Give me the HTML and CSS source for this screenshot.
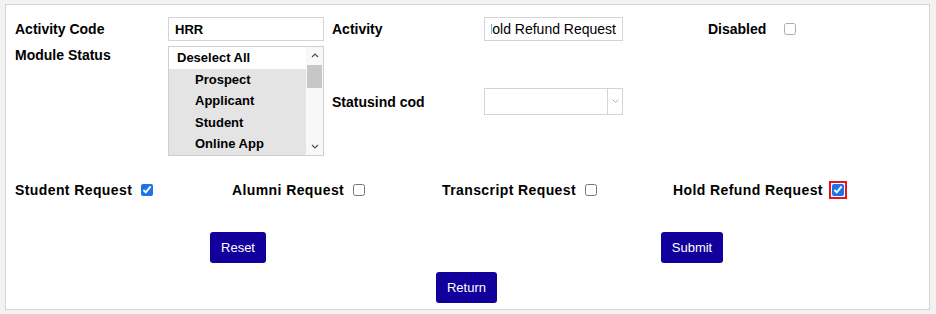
FILE: index.html
```html
<!DOCTYPE html>
<html lang="en">
<head>
  <meta charset="UTF-8">
  <title>Activity Setup</title>
  <link rel="stylesheet" href="styles.css">
</head>
<body>
  <div class="panel">
    <div class="top-grid">
      <label class="lbl row-center">Activity Code</label>
      <div class="text-box code-box">HRR</div>
      <label class="lbl row-center">Activity</label>
      <div class="text-box name-box"><div class="clip"><span>Hold Refund Request</span></div></div>
      <div class="check-cell row-center">
        <label class="lbl">Disabled</label>
        <input type="checkbox" class="chk chk-disabled">
      </div>

      <label class="lbl module-lbl">Module Status</label>
      <div class="listbox">
        <div class="list-items">
          <div class="list-item">Deselect All</div>
          <div class="list-item sub selected">Prospect</div>
          <div class="list-item sub selected">Applicant</div>
          <div class="list-item sub selected">Student</div>
          <div class="list-item sub selected">Online App</div>
        </div>
        <div class="scrollbar">
          <div class="sb-btn">
            <svg width="8" height="5" viewBox="0 0 8 5"><polyline points="1,4 4,1 7,4" fill="none" stroke="#505050" stroke-width="1.2"/></svg>
          </div>
          <div class="sb-track"><div class="sb-thumb"></div></div>
          <div class="sb-btn">
            <svg width="8" height="5" viewBox="0 0 8 5"><polyline points="1,1 4,4 7,1" fill="none" stroke="#505050" stroke-width="1.2"/></svg>
          </div>
        </div>
      </div>
      <label class="lbl status-lbl">Statusind cod</label>
      <div class="select-box">
        <div class="select-value"></div>
        <div class="select-arrow">
          <svg width="7" height="4" viewBox="0 0 7 4"><polyline points="0.5,0.5 3.5,3.5 6.5,0.5" fill="none" stroke="#b0b0b0" stroke-width="1"/></svg>
        </div>
      </div>
    </div>

    <div class="request-row">
      <div class="check-cell">
        <label class="lbl">Student Request</label>
        <input type="checkbox" class="chk" checked>
      </div>
      <div class="check-cell">
        <label class="lbl">Alumni Request</label>
        <input type="checkbox" class="chk">
      </div>
      <div class="check-cell">
        <label class="lbl">Transcript Request</label>
        <input type="checkbox" class="chk">
      </div>
      <div class="check-cell">
        <label class="lbl">Hold Refund Request</label>
        <input type="checkbox" class="chk chk-flagged" checked>
      </div>
    </div>

    <div class="button-row">
      <div class="btn-cell"><button class="btn">Reset</button></div>
      <div class="btn-cell"><button class="btn">Submit</button></div>
    </div>
    <div class="return-row">
      <button class="btn">Return</button>
    </div>
  </div>
</body>
</html>
```

FILE: styles.css
```css
html, body { margin: 0; padding: 0; }
body { background: #f2f2f2; color: #000; font-family: "Liberation Sans", Arial, sans-serif; padding: 4px 6px 4px 5px; }

.panel { background: #fff; border: 1px solid #d4d4d4; height: 304px; box-sizing: content-box; padding: 0; }

.top-grid { display: grid; grid-template-columns: 153px 164px 152px 224px auto; grid-template-rows: 24px 110px; row-gap: 5px; padding: 12px 0 0 9px; }
.lbl { font-size: 14px; font-weight: bold; color: #000; }
.row-center { align-self: center; }

.text-box { box-sizing: border-box; height: 24px; border: 1px solid #d4d4d4; font-size: 13px; display: flex; align-items: center; overflow: hidden; white-space: nowrap; }
.code-box { width: 156px; padding-left: 6px; font-weight: bold; }
.name-box { width: 139px; padding: 0 6px; font-size: 14px; }
.clip { flex: 1; display: flex; justify-content: flex-end; overflow: hidden; }
.clip span { flex-shrink: 0; }

.check-cell { display: flex; align-items: center; }
.chk { width: 12px; height: 12px; margin: 0 0 0 9px; accent-color: #1a73e8; }
.chk-disabled { margin-left: 18px; opacity: 0.6; }
.chk-flagged { outline: 2px solid #e8141b; outline-offset: 1px; margin-left: 9px; }

.module-lbl { padding-top: 1px; }
.listbox { box-sizing: border-box; width: 156px; height: 110px; border: 1px solid #cfcfcf; display: flex; }
.list-items { flex: 1; }
.list-item { height: 21.5px; line-height: 21px; font-size: 13px; font-weight: bold; padding-left: 8px; white-space: nowrap; }
.list-item.sub { padding-left: 26px; }
.list-item.selected { background: #e4e4e4; }

.scrollbar { width: 17px; display: flex; flex-direction: column; background: #f8f8f8; }
.sb-btn { height: 17px; display: flex; align-items: center; justify-content: center; }
.sb-track { flex: 1; }
.sb-thumb { height: 23px; margin: 1px 1px 0 1px; background: #c7c7c7; }

.status-lbl { align-self: center; padding-top: 2px; }
.select-box { box-sizing: border-box; align-self: center; width: 139px; height: 27px; border: 1px solid #d4d4d4; display: flex; }
.select-value { flex: 1; }
.select-arrow { width: 14px; border-left: 1px solid #d4d4d4; display: flex; align-items: center; justify-content: center; }

.request-row { display: grid; grid-template-columns: 217px 210px 231px auto; height: 20px; align-items: center; margin-top: 24px; padding-left: 9px; }
.request-row .lbl { letter-spacing: 0.4px; }

.button-row { display: grid; grid-template-columns: 454px 454px; padding-left: 5px; margin-top: 32px; }
.btn-cell { display: flex; justify-content: center; }
.return-row { display: flex; justify-content: center; margin-top: 9px; padding-right: 2px; }

.btn { height: 31px; padding: 0 11px; background: #12009c; color: #fff; border: none; border-radius: 3px; font-family: inherit; font-size: 13px; cursor: pointer; }
.btn:hover { background: #2a17b8; }
```
